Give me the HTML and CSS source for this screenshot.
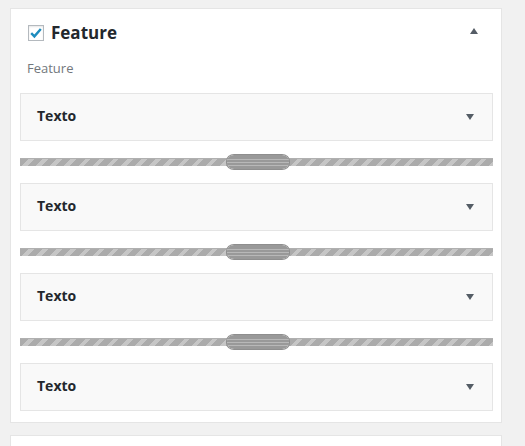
FILE: index.html
```html
<!DOCTYPE html>
<html>
<head>
<meta charset="utf-8">
<link rel="stylesheet" href="styles.css">
</head>
<body>
<div class="panel">
  <div class="header">
    <div class="title-row">
      <span class="checkbox">
        <svg width="14" height="14" viewBox="0 0 14 14"><path d="M2.2 7.2 L5.4 10.4 L11.8 3" fill="none" stroke="#1e8cbe" stroke-width="2.4"/></svg>
      </span>
      <span class="title">Feature</span>
    </div>
    <span class="toggle-up"></span>
  </div>
  <div class="subtitle">Feature</div>
  <div class="list">
    <div class="item"><span class="item-label">Texto</span><span class="arrow-down"></span></div>
    <div class="divider"><span class="handle"></span></div>
    <div class="item"><span class="item-label">Texto</span><span class="arrow-down"></span></div>
    <div class="divider"><span class="handle"></span></div>
    <div class="item"><span class="item-label">Texto</span><span class="arrow-down"></span></div>
    <div class="divider"><span class="handle"></span></div>
    <div class="item"><span class="item-label">Texto</span><span class="arrow-down"></span></div>
  </div>
</div>
<div class="panel panel-next"></div>
</body>
</html>
```
FILE: styles.css
```css
html, body {
  margin: 0;
  padding: 0;
  background: #f1f1f1;
  font-family: "Open Sans", "Liberation Sans", sans-serif;
  color: #23282d;
}
body {
  padding: 8px 0 0 10px;
}
.panel {
  background: #fff;
  border: 1px solid #e5e5e5;
  box-sizing: content-box;
  padding: 0 8px 11px 9px;
  width: 473px;
}
.panel-next {
  margin-top: 12px;
  height: 20px;
  padding: 0;
  width: 490px;
}
.header {
  position: relative;
  padding: 12px 0 0 8px;
}
.title-row {
  display: flex;
  align-items: center;
  height: 24px;
  gap: 7px;
}
.checkbox {
  width: 16px;
  height: 16px;
  box-sizing: border-box;
  border: 1px solid #b4b9be;
  background: #fff;
  box-shadow: inset 0 1px 2px rgba(0,0,0,0.1);
  display: flex;
  align-items: center;
  justify-content: center;
}
.title {
  font-size: 17px;
  font-weight: 700;
  line-height: 24px;
  color: #23282d;
}
.toggle-up {
  position: absolute;
  right: 15px;
  top: 19px;
  width: 0;
  height: 0;
  border-left: 4px solid transparent;
  border-right: 4px solid transparent;
  border-bottom: 6px solid #555d66;
}
.subtitle {
  margin: 13px 0 15px 7px;
  font-size: 13px;
  line-height: 20px;
  color: #72777c;
}
.list {
  display: flex;
  flex-direction: column;
  gap: 17px;
}
.item {
  display: flex;
  justify-content: space-between;
  align-items: center;
  border: 1px solid #e5e5e5;
  background: #f9f9f9;
  padding: 12px 18px 14px 16px;
}
.item-label {
  font-size: 14px;
  font-weight: 700;
  line-height: 20px;
  color: #23282d;
}
.arrow-down {
  width: 0;
  height: 0;
  margin-top: 2px;
  border-left: 4px solid transparent;
  border-right: 4px solid transparent;
  border-top: 6px solid #555d66;
}
.divider {
  position: relative;
  height: 8px;
  background: repeating-linear-gradient(135deg, #ababab 0 6px, #c6c6c6 6px 10px);
  border-top: 1px solid #b0b0b0;
  box-sizing: border-box;
}
.handle {
  position: absolute;
  top: -4px;
  left: 207px;
  width: 62px;
  height: 14px;
  border-radius: 7px / 6px;
  background:
    linear-gradient(#999 0 4px, #b8b8b8 4px 5px, #999 5px 7px, #b8b8b8 7px 8px, #999 8px 10px, #b8b8b8 10px 11px, #999 11px 14px);
  box-shadow: 0 0 0 1px #8e8e8e;
}
```
